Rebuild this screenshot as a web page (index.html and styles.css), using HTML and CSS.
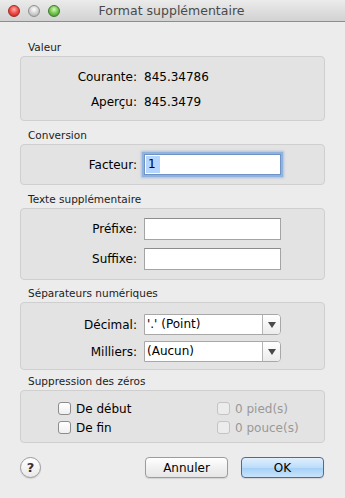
FILE: index.html
```html
<!DOCTYPE html>
<html lang="fr">
<head>
  <meta charset="UTF-8" />
  <meta name="viewport" content="width=device-width, initial-scale=1.0" />
  <title>Format supplémentaire</title>
  <link rel="stylesheet" href="styles.css">
</head>
<body>
  <div class="window">
    <div class="titlebar">
      <div class="lights">
        <span class="light red"></span>
        <span class="light gray"></span>
        <span class="light green"></span>
      </div>
      <div class="title">Format supplémentaire</div>
      <div></div>
    </div>

    <div class="content">
      <div class="group">
        <div class="group-label">Valeur</div>
        <div class="group-box box-valeur">
          <div class="row"><span class="row-label">Courante:</span><span class="row-value">845.34786</span></div>
          <div class="row"><span class="row-label">Aperçu:</span><span class="row-value">845.3479</span></div>
        </div>
      </div>

      <div class="group">
        <div class="group-label">Conversion</div>
        <div class="group-box box-conversion">
          <div class="row">
            <span class="row-label">Facteur:</span>
            <div class="field focused"><span class="selected">1</span></div>
          </div>
        </div>
      </div>

      <div class="group">
        <div class="group-label">Texte supplémentaire</div>
        <div class="group-box box-texte">
          <div class="row"><span class="row-label">Préfixe:</span><div class="field"></div></div>
          <div class="row"><span class="row-label">Suffixe:</span><div class="field"></div></div>
        </div>
      </div>

      <div class="group group-sep">
        <div class="group-label">Séparateurs numériques</div>
        <div class="group-box box-sep">
          <div class="row">
            <span class="row-label">Décimal:</span>
            <div class="popup"><span class="popup-text">'.' (Point)</span><span class="popup-arrow"></span></div>
          </div>
          <div class="row">
            <span class="row-label">Milliers:</span>
            <div class="popup"><span class="popup-text">(Aucun)</span><span class="popup-arrow"></span></div>
          </div>
        </div>
      </div>

      <div class="group group-zeros">
        <div class="group-label">Suppression des zéros</div>
        <div class="group-box box-zeros">
          <label class="check"><span class="box"></span>De début</label>
          <label class="check disabled"><span class="box"></span>0 pied(s)</label>
          <label class="check"><span class="box"></span>De fin</label>
          <label class="check disabled"><span class="box"></span>0 pouce(s)</label>
        </div>
      </div>

      <div class="footer">
        <button class="help">?</button>
        <div class="actions">
          <button class="btn">Annuler</button>
          <button class="btn default">OK</button>
        </div>
      </div>
    </div>
  </div>
</body>
</html>
```

FILE: styles.css
```css
body {
  margin: 0;
  padding: 0;
  font-family: "DejaVu Sans", "Liberation Sans", sans-serif;
  background: #ececec;
  color: #000;
}

.window {
  width: 345px;
  height: 498px;
  background: #ececec;
  overflow: hidden;
}

.titlebar {
  height: 21px;
  display: grid;
  grid-template-columns: 1fr auto 1fr;
  align-items: center;
  background: linear-gradient(to bottom, #ebebeb, #d2d2d2);
  border-bottom: 1px solid #8e8e8e;
}

.lights {
  display: flex;
  gap: 8px;
  padding-left: 8px;
}

.light {
  width: 12px;
  height: 12px;
  border-radius: 50%;
  box-sizing: border-box;
}

.light.red {
  background: radial-gradient(circle at 50% 35%, #ffb0a8 0, #f2534d 45%, #b81c17 100%);
  border: 1px solid #9e2a26;
}

.light.gray {
  background: radial-gradient(circle at 50% 35%, #ffffff 0, #d6d6d6 45%, #a4a4a4 100%);
  border: 1px solid #8f8f8f;
}

.light.green {
  background: radial-gradient(circle at 50% 35%, #d6f7c2 0, #7ccb55 45%, #3a8c22 100%);
  border: 1px solid #3d7a2a;
}

.title {
  font-size: 12.5px;
  color: #4a4a4a;
  padding-right: 2px;
}

.content {
  padding: 18px 20px 0;
}

.group + .group {
  margin-top: 7px;
}

.group + .group-sep {
  margin-top: 6px;
}

.group + .group-zeros {
  margin-top: 4px;
}

.group-label {
  font-size: 10.5px;
  line-height: 14px;
  color: #222;
  padding-left: 8px;
  margin-bottom: 2px;
}

.group-box {
  background: #e3e3e3;
  border: 1px solid #cfcfcf;
  border-radius: 4px;
}

.row {
  display: flex;
  align-items: center;
  font-size: 12px;
}

.row-label {
  width: 116px;
  text-align: right;
  margin-right: 7px;
}

.box-valeur {
  padding: 11px 0 9px;
}

.box-valeur .row {
  height: 18px;
}

.box-valeur .row + .row {
  margin-top: 7px;
}

.box-conversion {
  padding: 9px 0;
}

.box-texte {
  padding: 9px 0;
}

.box-texte .row + .row {
  margin-top: 8px;
}

.field {
  width: 137px;
  height: 22px;
  box-sizing: border-box;
  background: #fff;
  border: 1px solid #a4a4a4;
  border-top-color: #8c8c8c;
  font-size: 12px;
  display: flex;
  align-items: stretch;
  padding: 1px 0 1px 1px;
}

.field.focused {
  height: 21px;
  border-color: #6f93c4;
  box-shadow: 0 0 0 2px #8fb3de, 0 0 2px 3px rgba(120, 160, 210, 0.5);
}

.selected {
  background: #b4d5fe;
  padding: 0 4px 0 2px;
  line-height: 17px;
}

.box-sep {
  padding: 11px 0 7px;
}

.box-sep .row + .row {
  margin-top: 6px;
}

.popup {
  width: 137px;
  height: 21px;
  box-sizing: border-box;
  display: flex;
  background: #fff;
  border: 1px solid #a8a8a8;
  border-radius: 0 4px 4px 0;
  font-size: 12px;
}

.popup-text {
  flex: 1;
  padding-left: 2px;
  line-height: 19px;
}

.popup-arrow {
  width: 17px;
  border-left: 1px solid #b4b4b4;
  background: linear-gradient(to bottom, #ffffff, #ececec);
  border-radius: 0 3px 3px 0;
  display: flex;
  align-items: center;
  justify-content: center;
}

.popup-arrow::after {
  content: "";
  border-left: 4px solid transparent;
  border-right: 4px solid transparent;
  border-top: 6px solid #4a4a4a;
  margin-left: 1px;
}

.box-zeros {
  display: grid;
  grid-template-columns: 159px 1fr;
  padding: 8px 0 5px 37px;
}

.check {
  display: flex;
  align-items: center;
  height: 19px;
  font-size: 12px;
}

.check .box {
  width: 13px;
  height: 13px;
  box-sizing: border-box;
  border: 1px solid #8c8c8c;
  border-radius: 3px;
  background: linear-gradient(to bottom, #ffffff, #f0f0f0);
  margin-right: 5px;
}

.check.disabled {
  color: #999;
}

.check.disabled .box {
  border-color: #c4c4c4;
  background: #ececec;
}

.footer {
  display: flex;
  justify-content: space-between;
  align-items: center;
  margin-top: 14px;
}

.help {
  width: 21px;
  height: 21px;
  padding: 0;
  border-radius: 50%;
  border: 1px solid #9a9a9a;
  background: linear-gradient(to bottom, #ffffff, #e9e9e9);
  box-shadow: 0 1px 1px rgba(0, 0, 0, 0.12);
  font-family: "DejaVu Sans", sans-serif;
  font-size: 13px;
  font-weight: bold;
  color: #333;
  line-height: 19px;
}

.actions {
  display: flex;
  gap: 13px;
  padding-right: 1px;
}

.btn {
  width: 83px;
  height: 21px;
  padding: 0;
  border: 1px solid #9c9c9c;
  border-radius: 4px;
  background: linear-gradient(to bottom, #ffffff, #f1f1f1 50%, #e6e6e6);
  box-shadow: 0 1px 1px rgba(0, 0, 0, 0.1);
  font-family: "DejaVu Sans", sans-serif;
  font-size: 12px;
  color: #000;
}

.btn.default {
  border-color: #5a6590;
  background: linear-gradient(to bottom, #e1f0fd, #bcdcfa 50%, #a4cff6 51%, #c8e4fb);
}
```
